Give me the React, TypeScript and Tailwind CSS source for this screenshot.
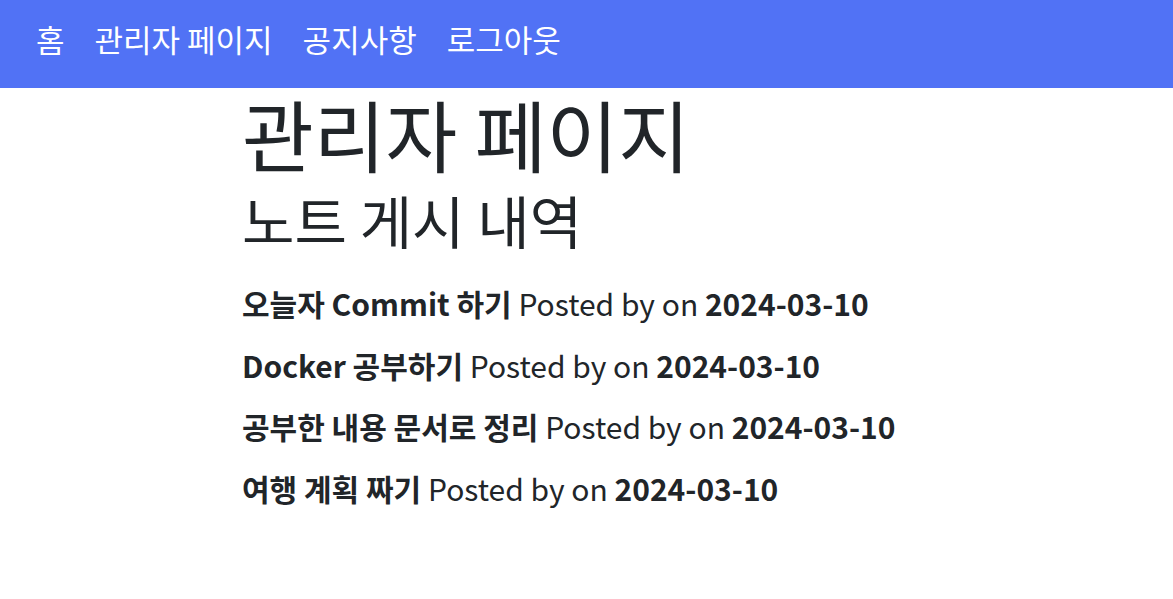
const notes = [
  { title: "오늘자 Commit 하기", date: "2024-03-10" },
  { title: "Docker 공부하기", date: "2024-03-10" },
  { title: "공부한 내용 문서로 정리", date: "2024-03-10" },
  { title: "여행 계획 짜기", date: "2024-03-10" },
];

const App = () => {
  return (
    <div className="min-h-screen bg-white font-['Noto_Sans_CJK_KR',sans-serif] text-[#212529]">
      <nav className="h-[88px] bg-[#5172f5] flex items-start gap-[30px] px-[36px] pt-[17px] text-white text-[31px] leading-[44px]">
        <a href="#">홈</a>
        <a href="#">관리자 페이지</a>
        <a href="#">공지사항</a>
        <a href="#">로그아웃</a>
      </nav>

      <main className="pl-[242px]">
        <h1 className="text-[78px] leading-[90px]">관리자 페이지</h1>
        <h2 className="text-[57px] leading-[82px] mb-[19px]">노트 게시 내역</h2>
        <ul className="flex flex-col gap-[13.5px] text-[30px] leading-[48px]">
          {notes.map((n) => (
            <li key={n.title}>
              <strong className="font-bold">{n.title}</strong> Posted by on{" "}
              <strong className="font-bold">{n.date}</strong>
            </li>
          ))}
        </ul>
      </main>
    </div>
  );
};

export default App;
